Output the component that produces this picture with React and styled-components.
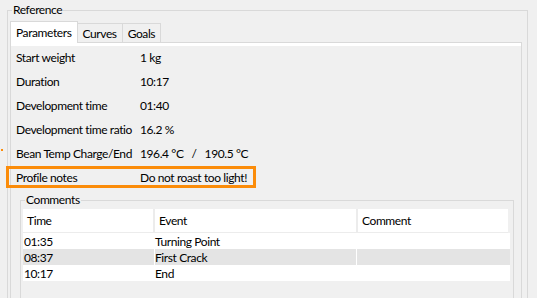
import React from 'react';
import styled, { createGlobalStyle } from 'styled-components';

const GlobalStyle = createGlobalStyle`
  html, body {
    margin: 0;
    padding: 0;
    background: #f0f0f0;
    overflow: hidden;
  }
  body {
    font-family: Lato, "Noto Sans", "Liberation Sans", sans-serif;
    font-size: 12px;
    letter-spacing: -0.4px;
    color: #000;
    white-space: nowrap;
  }
`;

const BORDER = '#d9d9d9';
const ORANGE = '#fb8c0a';

const Page = styled.div`
  width: 537px;
  height: 298px;
  padding: 10px 0 0 7px;
  box-sizing: border-box;
  overflow: hidden;
`;

const Group = styled.div`
  position: relative;
  box-sizing: border-box;
  border: 1px solid ${BORDER};
  border-bottom: none;
  padding: ${(p) => p.$pad};
  margin: ${(p) => p.$margin || 0};
  width: ${(p) => p.$width || 'auto'};
  height: ${(p) => p.$height || 'auto'};
`;

const GroupTitle = styled.span`
  position: absolute;
  top: -9px;
  left: ${(p) => p.$left || 4}px;
  padding: 0 1px;
  line-height: 16px;
  background: #f0f0f0;
`;

const TabBar = styled.div`
  display: flex;
  align-items: flex-end;
  height: 21px;
`;

const Tab = styled.div`
  box-sizing: border-box;
  height: ${(p) => (p.$active ? 22 : 19)}px;
  padding: 0 ${(p) => (p.$active ? 5 : 5)}px;
  display: flex;
  align-items: center;
  border: 1px solid ${BORDER};
  border-bottom: none;
  border-left: ${(p) => (p.$first ? `1px solid ${BORDER}` : 'none')};
  background: ${(p) => (p.$active ? '#fff' : '#f0f0f0')};
  margin-bottom: ${(p) => (p.$active ? -1 : 0)}px;
  position: relative;
  z-index: ${(p) => (p.$active ? 1 : 0)};
`;

const Pane = styled.div`
  box-sizing: border-box;
  border: 1px solid ${BORDER};
  border-bottom: none;
  box-shadow: inset 0 3px 0 #fff;
  padding: 3px 7px 0 5px;
  height: 260px;
`;

const Row = styled.div`
  position: relative;
  box-sizing: border-box;
  display: grid;
  grid-template-columns: 124px 1fr;
  align-items: center;
  height: 24px;
  padding-bottom: 2px;
`;

const NotesRow = styled(Row)`
  width: 250px;
  height: 22px;
  margin: 0 0 2px -10px;
  padding: 0 0 0 7px;
  border: 3px solid ${ORANGE};
`;

const Marker = styled.span`
  position: absolute;
  left: -15px;
  top: 7px;
  width: 2px;
  height: 2px;
  background: ${ORANGE};
`;

const TempValue = styled.span`
  white-space: pre;
`;

const Table = styled.div`
  width: 487px;
`;

const HeaderRow = styled.div`
  display: grid;
  grid-template-columns: 132px 203px 150px;
  height: 24px;
  background: #fff;
  border-bottom: 1px solid #ececec;
  width: 485px;
  box-sizing: border-box;
`;

const HeaderCell = styled.div`
  display: flex;
  align-items: center;
  padding-left: 4px;
  border-right: ${(p) => (p.$last ? 'none' : '2px solid #ececec')};
`;

const BodyRow = styled.div`
  display: grid;
  grid-template-columns: 132px 202px 1fr;
  height: 16px;
  background: ${(p) => (p.$alt ? '#e4e4e4' : '#fff')};
`;

const Cell = styled.div`
  display: flex;
  align-items: center;
  padding-left: 1px;
  border-right: ${(p) => (p.$last ? 'none' : '1px solid #fff')};
  &:nth-child(2) {
    padding-left: 0;
  }
`;

const params = [
  ['Start weight', '1 kg'],
  ['Duration', '10:17'],
  ['Development time', '01:40'],
  ['Development time ratio', '16.2 %'],
];

const comments = [
  ['01:35', 'Turning Point', ''],
  ['08:37', 'First Crack', ''],
  ['10:17', 'End', ''],
];

export default function App() {
  return (
    <Page>
      <GlobalStyle />
      <Group $pad="10px 5px 0 2px" $width="521px" $height="300px">
        <GroupTitle $left={4}>Reference</GroupTitle>
        <TabBar>
          <Tab $active $first>Parameters</Tab>
          <Tab>Curves</Tab>
          <Tab>Goals</Tab>
        </TabBar>
        <Pane>
          {params.map(([label, value]) => (
            <Row key={label}>
              <span>{label}</span>
              <span>{value}</span>
            </Row>
          ))}
          <Row>
            <Marker />
            <span>Bean Temp Charge/End</span>
            <TempValue>{'196.4 °C   /   190.5 °C'}</TempValue>
          </Row>
          <NotesRow>
            <span>Profile notes</span>
            <span>Do not roast too light!</span>
          </NotesRow>
          <Group $pad="8px 3px 0 2px" $margin="12px 0 0 4px" $width="494px" $height="100px">
            <GroupTitle $left={4}>Comments</GroupTitle>
            <Table>
              <HeaderRow>
                <HeaderCell>Time</HeaderCell>
                <HeaderCell>Event</HeaderCell>
                <HeaderCell $last>Comment</HeaderCell>
              </HeaderRow>
              {comments.map(([time, event, note], i) => (
                <BodyRow key={time} $alt={i % 2 === 1}>
                  <Cell>{time}</Cell>
                  <Cell>{event}</Cell>
                  <Cell $last>{note}</Cell>
                </BodyRow>
              ))}
            </Table>
          </Group>
        </Pane>
      </Group>
    </Page>
  );
}
